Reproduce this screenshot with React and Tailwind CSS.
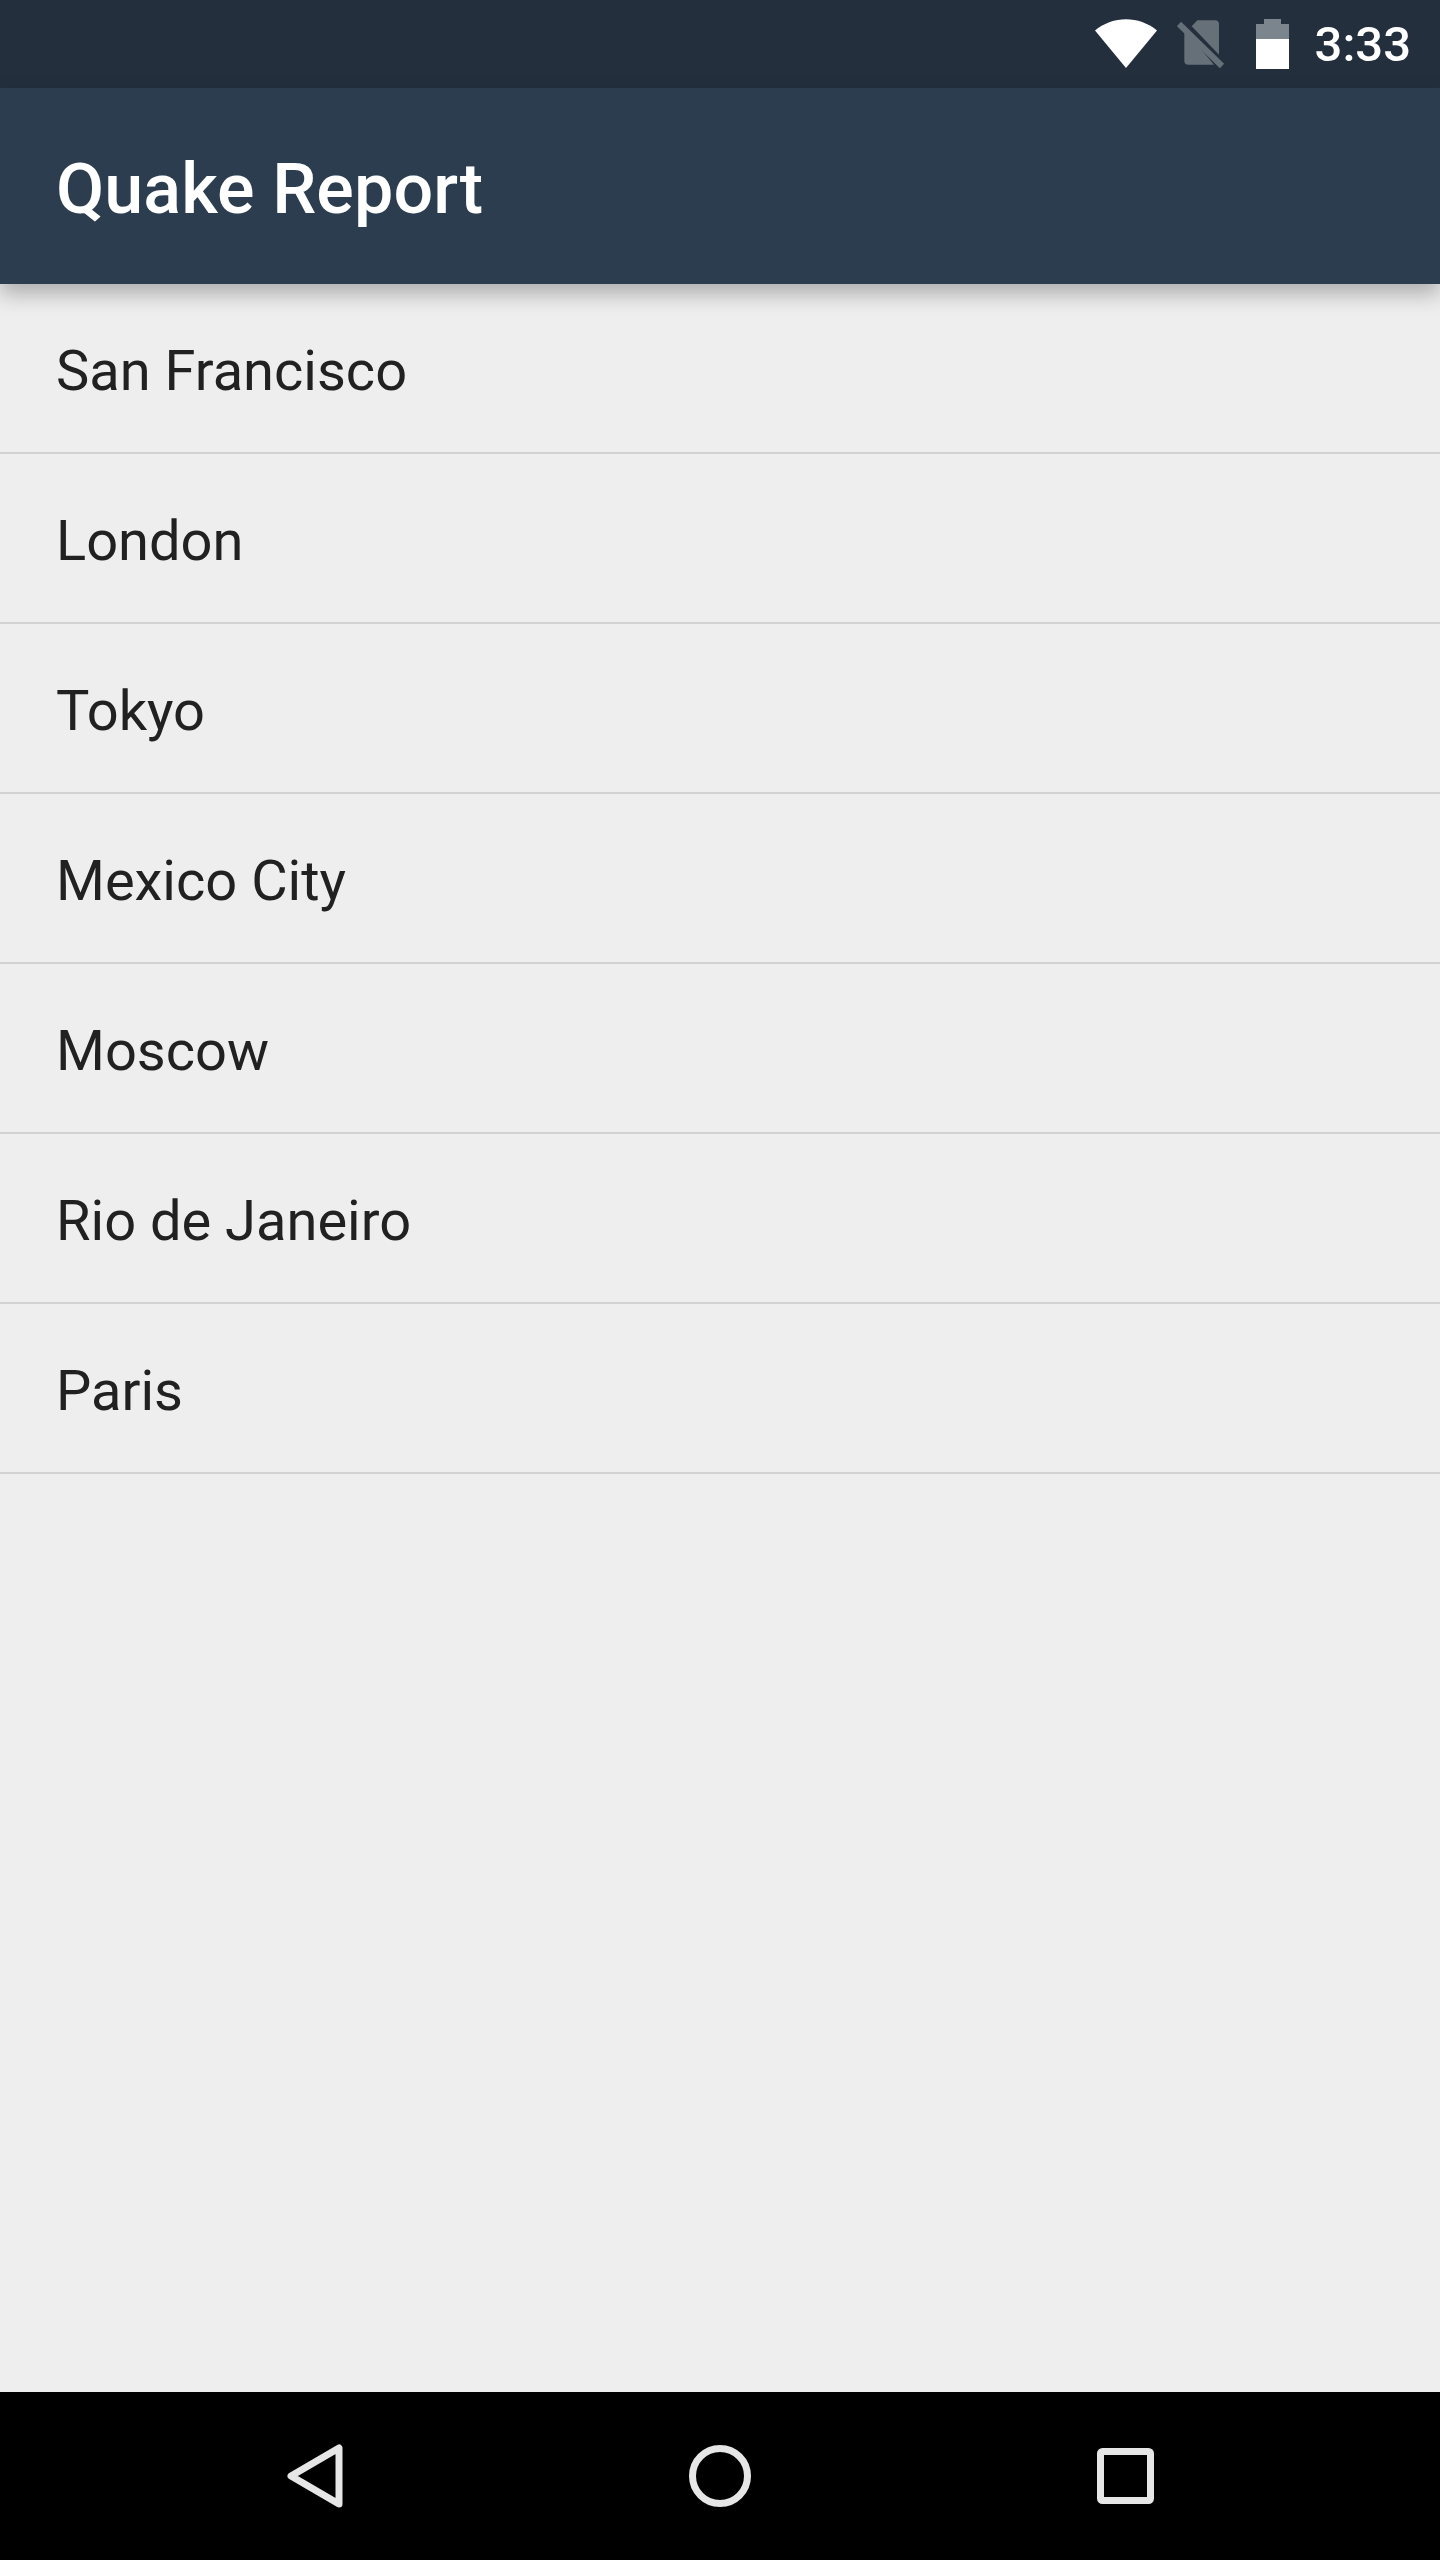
import React from "react";

const cities = ["San Francisco", "London", "Tokyo", "Mexico City", "Moscow", "Rio de Janeiro", "Paris"];

const StatusBar = () => {
  return (
    <div className="h-[88px] shrink-0 bg-[#232f3d] flex items-center justify-end pr-[29px]">
      {/* wifi */}
      <svg width="62" height="50" viewBox="0 0 62 50" className="mr-[20px]">
        <path d="M0 11.5 C18 -3.5 44 -3.5 62 11.5 L31 49 Z" fill="#ffffff" />
      </svg>
      {/* no sim */}
      <svg width="48" height="50" viewBox="0 0 48 50" className="mr-[31px]">
        <path d="M14.7 7.3 L20.3 1.3 H38 Q42 1.3 42 5.3 V35.7 Z" fill="#657079" />
        <path d="M7.3 10 L37 45.7 H11.3 Q7.3 45.7 7.3 41.7 Z" fill="#657079" />
        <path d="M2 5 L45 47" stroke="#657079" strokeWidth="6" />
      </svg>
      {/* battery */}
      <svg width="33" height="50" viewBox="0 0 33 50" className="mr-[26px]">
        <path d="M8 0 H25 V5 H33 V20 H0 V5 H8 Z" fill="#7b858d" />
        <path d="M0 20 H33 V50 H0 Z" fill="#ffffff" />
      </svg>
      <span className="font-['Roboto',sans-serif] font-medium text-[49px] leading-none text-white">3:33</span>
    </div>
  );
};

const AppBar = () => {
  return (
    <div className="h-[196px] shrink-0 bg-[#2c3d4f] flex items-center pl-[56px] pt-[6px] shadow-[0_10px_20px_rgba(0,0,0,0.27)] z-10">
      <h1 className="font-['Roboto',sans-serif] font-medium text-[70px] leading-none tracking-[0.1px] text-white">Quake Report</h1>
    </div>
  );
};

const NavBar = () => {
  return (
    <div className="h-[168px] shrink-0 bg-black flex justify-center">
      <div className="w-[405px] flex items-center justify-center">
        <svg width="56" height="64" viewBox="0 0 56 64">
          <path d="M52 4 V60 L4 32 Z" fill="none" stroke="#e6e6e6" strokeWidth="7" strokeLinejoin="round" />
        </svg>
      </div>
      <div className="w-[405px] flex items-center justify-center">
        <svg width="62" height="62" viewBox="0 0 62 62">
          <circle cx="31" cy="31" r="27.5" fill="none" stroke="#e6e6e6" strokeWidth="7" />
        </svg>
      </div>
      <div className="w-[405px] flex items-center justify-center">
        <svg width="57" height="56" viewBox="0 0 57 56">
          <rect x="3.5" y="3.5" width="50" height="49" rx="2" fill="none" stroke="#e6e6e6" strokeWidth="7" />
        </svg>
      </div>
    </div>
  );
};

export default function App() {
  return (
    <div className="w-[1440px] h-[2560px] flex flex-col bg-[#eeeeee] overflow-hidden">
      <StatusBar />
      <AppBar />
      <ul className="flex-1">
        {cities.map((city) => (
          <li
            key={city}
            className="h-[170px] flex items-center pl-[56px] pt-[6px] border-b-2 border-[#d2d2d2] font-['Roboto',sans-serif] text-[56px] leading-none text-[#212121]"
          >
            {city}
          </li>
        ))}
      </ul>
      <NavBar />
    </div>
  );
}
